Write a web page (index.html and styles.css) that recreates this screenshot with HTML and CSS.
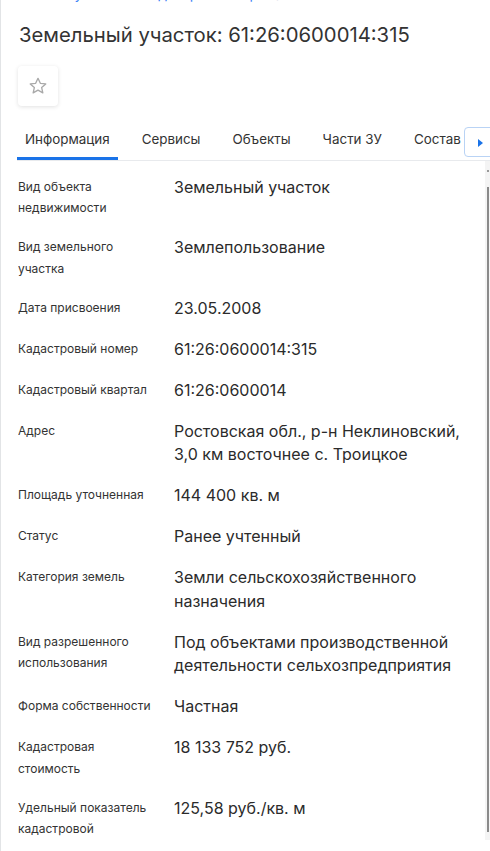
FILE: index.html
```html
<!DOCTYPE html>
<html lang="ru">
<head>
    <meta charset="UTF-8">
    <meta name="viewport" content="width=device-width, initial-scale=1.0">
    <title>Земельный участок</title>
    <link rel="stylesheet" href="styles.css">
</head>
<body>
    <div class="page">
        <div class="crumbs">
            <a href="#">Публичная кадастровая карта</a> / <a href="#">Ростовская обл.</a>
        </div>

        <h1 class="title">Земельный участок: 61:26:0600014:315</h1>

        <button class="fav" type="button" title="В избранное">
            <svg width="20" height="20" viewBox="0 0 24 24" fill="none" stroke="#a9a9a9" stroke-width="1.6" stroke-linejoin="round">
                <path d="M12 2.8l2.8 6 6.5.7-4.9 4.4 1.4 6.4L12 17l-5.8 3.3 1.4-6.4-4.9-4.4 6.5-.7z"/>
            </svg>
        </button>

        <div class="tabs">
            <a class="tab active" href="#">Информация</a>
            <a class="tab" href="#">Сервисы</a>
            <a class="tab" href="#">Объекты</a>
            <a class="tab" href="#">Части ЗУ</a>
            <a class="tab" href="#">Состав</a>
            <button class="tab-more" type="button">
                <svg width="6" height="8" viewBox="0 0 6 8"><path d="M0 0l5 4-5 4z" fill="#1a73e8"/></svg>
            </button>
        </div>

        <div class="content">
            <div class="rows">
                <div class="row">
                    <div class="label">Вид объекта недвижимости</div>
                    <div class="value">Земельный участок</div>
                </div>
                <div class="row">
                    <div class="label">Вид земельного участка</div>
                    <div class="value">Землепользование</div>
                </div>
                <div class="row">
                    <div class="label">Дата присвоения</div>
                    <div class="value">23.05.2008</div>
                </div>
                <div class="row">
                    <div class="label">Кадастровый номер</div>
                    <div class="value">61:26:0600014:315</div>
                </div>
                <div class="row">
                    <div class="label">Кадастровый квартал</div>
                    <div class="value">61:26:0600014</div>
                </div>
                <div class="row">
                    <div class="label">Адрес</div>
                    <div class="value">Ростовская обл., р-н Неклиновский, 3,0 км восточнее с. Троицкое</div>
                </div>
                <div class="row">
                    <div class="label">Площадь уточненная</div>
                    <div class="value">144 400 кв. м</div>
                </div>
                <div class="row">
                    <div class="label">Статус</div>
                    <div class="value">Ранее учтенный</div>
                </div>
                <div class="row">
                    <div class="label">Категория земель</div>
                    <div class="value">Земли сельскохозяйственного назначения</div>
                </div>
                <div class="row">
                    <div class="label">Вид разрешенного использования</div>
                    <div class="value">Под объектами производственной деятельности сельхозпредприятия</div>
                </div>
                <div class="row">
                    <div class="label">Форма собственности</div>
                    <div class="value">Частная</div>
                </div>
                <div class="row">
                    <div class="label">Кадастровая стоимость</div>
                    <div class="value">18 133 752 руб.</div>
                </div>
                <div class="row">
                    <div class="label">Удельный показатель кадастровой стоимости</div>
                    <div class="value">125,58 руб./кв. м</div>
                </div>
            </div>
            <div class="scrollbar">
                <div class="arrow"></div>
                <div class="thumb"></div>
            </div>
        </div>
    </div>
</body>
</html>
```

FILE: styles.css
```css
body {
    margin: 0;
    background-color: white;
    color: #333;
    font-family: Inter, "Liberation Sans", sans-serif;
    border-left: 1px solid #e2e4e6;
    height: 851px;
    overflow: hidden;
    box-sizing: border-box;
}
.page {
    padding-left: 17px;
}
.crumbs {
    margin-top: -14px;
    height: 16px;
    padding-left: 46px;
    font-size: 14px;
    line-height: 16px;
    color: #9ab;
}
.crumbs a {
    color: #3b82f6;
    text-decoration: none;
}
.title {
    margin: 19px 0 0 1px;
    font-size: 20.3px;
    line-height: 28px;
    font-weight: 400;
    color: #333;
}
.fav {
    display: flex;
    align-items: center;
    justify-content: center;
    width: 40px;
    height: 40px;
    margin-top: 17px;
    padding: 0;
    background: white;
    border: none;
    border-radius: 4px;
    box-shadow: 0 1px 4px rgba(0,0,0,0.12);
}
.tabs {
    position: relative;
    display: flex;
    gap: 16px;
    margin: 9px 0 0 -1px;
    border-bottom: 1px solid #e8eaed;
    overflow: hidden;
}
.tab {
    padding: 14px 8px 8px;
    font-size: 13.4px;
    line-height: 20px;
    color: #333;
    text-decoration: none;
    border-bottom: 3px solid transparent;
    white-space: nowrap;
}
.tab.active {
    border-bottom-color: #1a73e8;
}
.tab-more {
    position: absolute;
    top: 12px;
    right: -12px;
    width: 38px;
    height: 30px;
    padding: 0 0 0 13px;
    background: white;
    border: 1px solid #b9d3f5;
    border-radius: 4px;
    text-align: left;
}
.content {
    display: flex;
    height: 679px;
    overflow: hidden;
}
.rows {
    flex: 1;
    padding-top: 6px;
}
.row {
    display: grid;
    grid-template-columns: 140px 1fr;
    column-gap: 16px;
    padding: 8.5px 0 9px;
}
.label {
    font-size: 12px;
    line-height: 21.5px;
    color: #333;
}
.value {
    font-size: 16px;
    line-height: 23.5px;
    color: #2b2b2b;
    padding-right: 10px;
}
.scrollbar {
    width: 5px;
    margin-left: 8px;
    background: #f4f4f4;
    padding-top: 9px;
}
.arrow {
    margin-left: 2px;
    width: 2px;
    height: 2px;
    background: #999;
}
.thumb {
    margin: 15px 0 0 2px;
    width: 2px;
    height: 645px;
    background: #8a8a8a;
}
```
